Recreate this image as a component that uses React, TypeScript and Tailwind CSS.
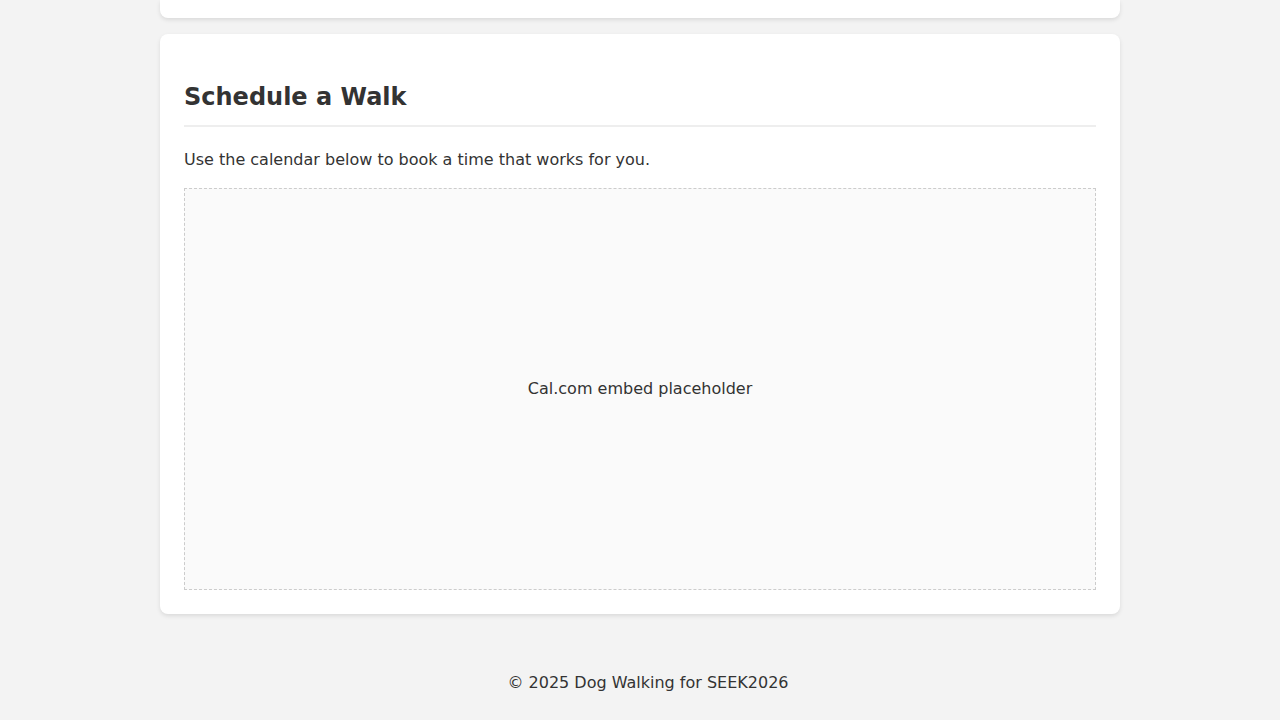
export default function App() {
  return (
    <div
      className="min-h-screen bg-[#f3f3f3] text-[#333]"
      style={{ fontFamily: '"DejaVu Sans", sans-serif' }}
    >
      <main className="mx-auto w-[960px]">
        {/* bottom of the previous card, scrolled out of view */}
        <section className="h-[18px] rounded-b-lg bg-white shadow-[0_2px_4px_rgba(0,0,0,0.1)]" />

        <section className="mt-4 rounded-lg bg-white px-6 pt-[49px] pb-6 shadow-[0_2px_4px_rgba(0,0,0,0.1)]">
          <h2 className="border-b-2 border-[#eee] pb-[14px] text-[24px] leading-[28px] font-bold">
            Schedule a Walk
          </h2>
          <p className="mt-[23px] text-[16px] leading-[19px]">
            Use the calendar below to book a time that works for you.
          </p>
          <div className="mt-[19px] flex h-[402px] items-center justify-center border border-dashed border-[#ccc] bg-[#fafafa] text-[16px]">
            Cal.com embed placeholder
          </div>
        </section>
      </main>

      <footer className="pt-[59px] pb-6 pl-4 text-center text-[16px] leading-[19px]">
        © 2025 Dog Walking for SEEK2026
      </footer>
    </div>
  );
}
